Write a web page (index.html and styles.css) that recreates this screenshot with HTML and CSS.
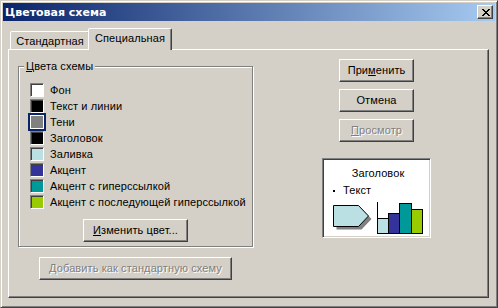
FILE: index.html
```html
<!DOCTYPE html>
<html lang="ru">
<head>
<meta charset="utf-8">
<title>Цветовая схема</title>
<link rel="stylesheet" href="styles.css">
</head>
<body>
<div class="win">
  <div class="titlebar">
    <span class="title">Цветовая схема</span>
    <button class="close" aria-label="Закрыть">
      <svg width="8" height="7" viewBox="0 0 8 7"><path d="M0 0h2v1h-2zM6 0h2v1h-2zM1 1h2v1h-2zM5 1h2v1h-2zM2 2h4v1h-4zM3 3h2v1h-2zM2 4h4v1h-4zM1 5h2v1h-2zM5 5h2v1h-2zM0 6h2v1h-2zM6 6h2v1h-2z" fill="#000"/></svg>
    </button>
  </div>
  <div class="body">
    <div class="tabs">
      <div class="tab">Стандартная</div>
      <div class="tab active">Специальная</div>
    </div>
    <div class="panel">
      <div class="col-left">
        <div class="group">
          <div class="legend"><u>Ц</u>вета схемы</div>
          <ul class="colors">
            <li><span class="sw c-white"></span>Фон</li>
            <li><span class="sw c-black"></span>Текст и линии</li>
            <li><span class="sw c-gray sel"></span>Тени</li>
            <li><span class="sw c-black"></span>Заголовок</li>
            <li><span class="sw c-fill"></span>Заливка</li>
            <li><span class="sw c-accent"></span>Акцент</li>
            <li><span class="sw c-link"></span>Акцент с гиперссылкой</li>
            <li><span class="sw c-vlink"></span>Акцент с последующей гиперссылкой</li>
          </ul>
          <button class="btn change"><u>И</u>зменить цвет...</button>
        </div>
        <button class="btn add" disabled><u>Д</u>обавить как стандартную схему</button>
      </div>
      <div class="col-right">
        <button class="btn side">При<u>м</u>енить</button>
        <button class="btn side">Отмена</button>
        <button class="btn side" disabled><u>П</u>росмотр</button>
        <div class="preview">
          <div class="pv-title">Заголовок</div>
          <div class="pv-text"><span class="bullet"></span>Текст</div>
          <svg class="pv-art" width="105" height="36" viewBox="0 0 105 36">
            <polygon points="13.5,8.5 38.5,8.5 48.5,19 38.5,29.5 13.5,29.5" fill="#808080"/>
            <polygon points="10.5,5.5 35.5,5.5 45.5,16 35.5,26.5 10.5,26.5" fill="#BBE0E3" stroke="#000" stroke-width="1"/>
            <line x1="54.5" y1="2" x2="54.5" y2="34" stroke="#000" stroke-width="1"/>
            <rect x="54.5" y="18.5" width="11" height="15" fill="#BBE0E3" stroke="#000" stroke-width="1"/>
            <rect x="65.5" y="13.5" width="11" height="20" fill="#333399" stroke="#000" stroke-width="1"/>
            <rect x="76.5" y="3.5" width="12" height="30" fill="#009999" stroke="#000" stroke-width="1"/>
            <rect x="88.5" y="9.5" width="11" height="24" fill="#99CC00" stroke="#000" stroke-width="1"/>
          </svg>
        </div>
      </div>
    </div>
  </div>
</div>
</body>
</html>
```
FILE: styles.css
```css
* { box-sizing: border-box; }
html, body { margin: 0; padding: 0; }
body {
  width: 498px;
  height: 308px;
  overflow: hidden;
  background: #D4D0C8;
  font: 11px/13px "Liberation Sans", Arial, sans-serif;
  letter-spacing: 0.1px;
  color: #000;
}
.win {
  width: 498px;
  height: 308px;
  border: 1px solid;
  border-color: #D4D0C8 #404040 #404040 #D4D0C8;
  box-shadow: inset 1px 1px #fff, inset -1px -1px #808080;
  padding: 2px;
  display: flex;
  flex-direction: column;
  background: #D4D0C8;
}
.titlebar {
  height: 18px;
  flex: none;
  display: flex;
  align-items: center;
  padding: 0 2px 0 2px;
  background: linear-gradient(to right, #0A246A, #A6CAF0);
}
.title {
  color: #fff;
  font: bold 11px/14px "DejaVu Sans", "Liberation Sans", sans-serif;
  letter-spacing: 0;
  padding-top: 1px;
}
.close {
  margin-left: auto;
  width: 16px;
  height: 14px;
  padding: 0 0 0 1px;
  border: 1px solid;
  border-color: #fff #404040 #404040 #fff;
  box-shadow: inset -1px -1px #808080;
  background: #D4D0C8;
  display: flex;
  align-items: center;
  justify-content: center;
}
.close svg { display: block; }
.body {
  flex: 1;
  display: flex;
  flex-direction: column;
  padding: 7px 6px 7px 5px;
}
.tabs {
  height: 21px;
  flex: none;
  display: flex;
  align-items: flex-end;
  padding-left: 2px;
}
.tab {
  width: 80px;
  height: 18px;
  border: 1px solid;
  border-bottom: 0;
  border-color: #fff #404040 transparent #fff;
  border-radius: 2px 2px 0 0;
  box-shadow: inset -1px 0 #808080;
  text-align: center;
  padding-top: 3px;
  background: #D4D0C8;
}
.tab.active {
  width: 84px;
  height: 22px;
  margin-left: -2px;
  margin-bottom: -1px;
  padding-top: 3px;
  position: relative;
  z-index: 1;
}
.panel {
  flex: 1;
  display: flex;
  border: 1px solid;
  border-color: #fff #404040 #404040 #fff;
  box-shadow: inset -1px -1px #808080;
  padding: 9px 0 0 9px;
}
.col-left {
  width: 235px;
  display: flex;
  flex-direction: column;
  align-items: flex-start;
}
.group {
  margin-top: 7px;
  width: 235px;
  border: 1px solid #808080;
  box-shadow: 1px 1px #fff, inset 1px 1px #fff;
  padding: 0 0 4px 0;
}
.legend {
  display: table;
  margin: -7px 0 0 5px;
  padding: 0 2px;
  background: #D4D0C8;
  height: 13px;
}
.colors {
  list-style: none;
  margin: 9px 0 0 0;
  padding: 0 0 0 11px;
}
.colors li {
  height: 16px;
  display: flex;
  align-items: center;
  gap: 6px;
}
.sw {
  width: 14px;
  height: 14px;
  flex: none;
  border: 1px solid;
  border-color: #808080 #fff #fff #808080;
  box-shadow: inset 1px 1px #404040;
}
.sw.sel {
  border: 1px solid #fff;
  box-shadow: none;
  outline: 2px solid #0A246A;
}
.c-white { background: #fff; }
.c-black { background: #000; }
.c-gray { background: #808080; }
.c-fill { background: #BBE0E3; }
.c-accent { background: #333399; }
.c-link { background: #009999; }
.c-vlink { background: #99CC00; }
.btn {
  font: inherit;
  letter-spacing: 0.1px;
  color: #000;
  background: #D4D0C8;
  height: 23px;
  padding: 0;
  border: 1px solid;
  border-color: #fff #404040 #404040 #fff;
  box-shadow: inset -1px -1px #808080;
  text-align: center;
}
.btn:disabled {
  color: #808080;
  text-shadow: 1px 1px 0 #fff;
}
.change {
  display: block;
  width: 105px;
  margin: 9px auto 0;
}
.add {
  width: 193px;
  margin: 10px 0 0 21px;
}
.col-right {
  width: 109px;
  margin-left: 69px;
  display: flex;
  flex-direction: column;
  align-items: center;
  gap: 7px;
}
.side { width: 75px; }
.preview {
  margin-top: 9px;
  width: 109px;
  height: 80px;
  background: #fff;
  border: 1px solid;
  border-color: #808080 #fff #fff #808080;
  box-shadow: inset 1px 1px #404040, inset -1px -1px #D4D0C8;
  padding-top: 8px;
}
.pv-title {
  text-align: center;
  padding-left: 3px;
}
.pv-text {
  margin-top: 4px;
  padding-left: 10px;
  display: flex;
  align-items: center;
}
.bullet {
  width: 2px;
  height: 2px;
  background: #000;
  margin: 1px 8px 0 0;
}
.pv-art {
  display: block;
  margin-top: 3px;
}
```
